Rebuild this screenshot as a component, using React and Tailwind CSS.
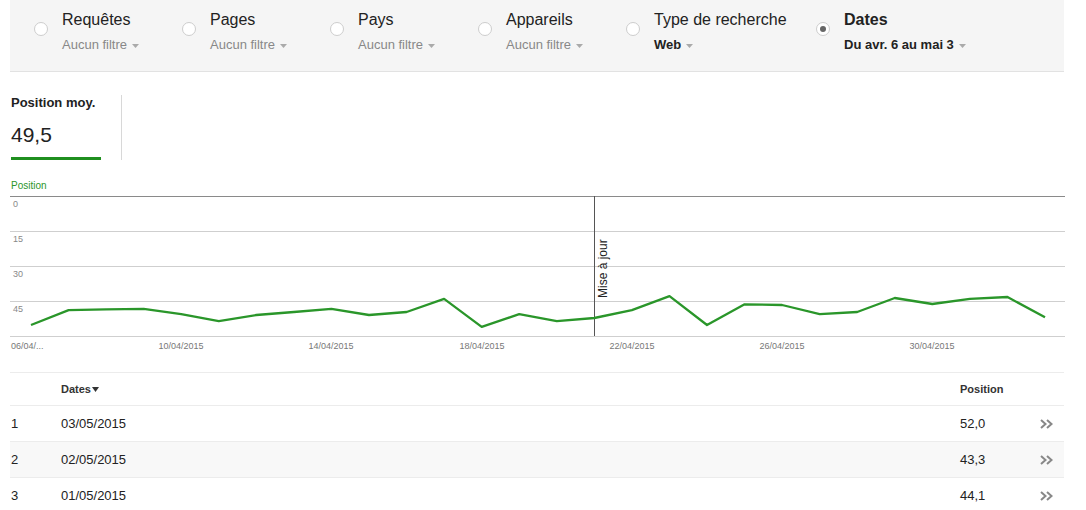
const filters = [
  { title: 'Requêtes', sub: 'Aucun filtre', w: 'w-[148px]' },
  { title: 'Pages', sub: 'Aucun filtre', w: 'w-[148px]' },
  { title: 'Pays', sub: 'Aucun filtre', w: 'w-[148px]' },
  { title: 'Appareils', sub: 'Aucun filtre', w: 'w-[148px]' },
  { title: 'Type de recherche', sub: 'Web', strong: true, w: 'w-[190px]' },
  { title: 'Dates', sub: 'Du avr. 6 au mai 3', strong: true, bold: true, selected: true, w: 'w-[220px]' },
];

// average position per day, Apr 6 -> May 3
const values = [
  55.3, 48.9, 48.6, 48.4, 50.6, 53.6, 51.0, 49.7, 48.4, 51.0, 49.7, 44.1, 56.1, 50.6,
  53.6, 52.3, 48.9, 42.9, 55.3, 46.4, 46.7, 50.6, 49.7, 43.7, 46.3, 44.1, 43.3, 52.0,
];

const rows = [
  { n: 1, date: '03/05/2015', pos: '52,0' },
  { n: 2, date: '02/05/2015', pos: '43,3' },
  { n: 3, date: '01/05/2015', pos: '44,1' },
];

const Caret = () => (
  <svg width="7" height="4" viewBox="0 0 7 4" className="ml-[5px] mt-[1px]">
    <path d="M0 0h7L3.5 4z" fill="#aaa" />
  </svg>
);

const FilterBar = () => (
  <div className="flex h-[72px] w-[1054px] border-b border-[#e2e2e2] bg-[#f5f5f5] pl-[24px]">
    {filters.map((f) => (
      <div key={f.title} className={`flex ${f.w} pt-[10px]`}>
        <div className="mt-[12px] flex h-[14px] w-[14px] items-center justify-center rounded-full border border-[#cdcdcd] bg-white">
          {f.selected && <div className="h-[6px] w-[6px] rounded-full bg-[#666]" />}
        </div>
        <div className="ml-[14px] flex flex-col">
          <div className={`text-[16px] leading-[20px] text-[#222] ${f.bold ? 'font-bold' : ''}`}>{f.title}</div>
          <div className="mt-[5px] flex items-center">
            <span className={`text-[13px] leading-[20px] ${f.strong ? 'font-bold text-[#222]' : 'text-[#888]'}`}>
              {f.sub}
            </span>
            <Caret />
          </div>
        </div>
      </div>
    ))}
  </div>
);

const Chart = () => {
  const pts = values
    .map((v, i) => `${(21 + i * 37.556).toFixed(1)},${(6 + v * (35 / 15)).toFixed(1)}`)
    .join(' ');
  const dates = [
    ['10/04/2015', 171],
    ['14/04/2015', 321],
    ['18/04/2015', 472],
    ['22/04/2015', 622],
    ['26/04/2015', 772],
    ['30/04/2015', 922],
  ];
  return (
    <svg width="1055" height="166" className="block">
      <line x1="0" y1="6.5" x2="1055" y2="6.5" stroke="#8a8a8a" />
      {[41.5, 76.5, 111.5, 146.5].map((y) => (
        <line key={y} x1="0" y1={y} x2="1055" y2={y} stroke="#cfcfcf" />
      ))}
      {[['0', 17], ['15', 52], ['30', 87], ['45', 122]].map(([t, y]) => (
        <text key={t} x="3" y={y} fontSize="9" fill="#888">{t}</text>
      ))}
      <line x1="584.5" y1="6" x2="584.5" y2="146" stroke="#555" />
      <text
        x="0"
        y="0"
        fontSize="12"
        fill="#222"
        transform="translate(597 108) rotate(-90)"
      >
        Mise à jour
      </text>
      <polyline points={pts} fill="none" stroke="#2a962a" strokeWidth="2.3" strokeLinejoin="round" />
      <text x="1" y="159" fontSize="9" fill="#777">06/04/...</text>
      {dates.map(([t, x]) => (
        <text key={t} x={x} y="159" fontSize="9" fill="#777" textAnchor="middle">{t}</text>
      ))}
    </svg>
  );
};

const Chevrons = () => (
  <svg width="13" height="10" viewBox="0 0 13 10">
    <path d="M1 1l4.5 4L1 9M7 1l4.5 4L7 9" fill="none" stroke="#888" strokeWidth="2" />
  </svg>
);

export default function App() {
  return (
    <div className="min-h-[510px] bg-white pl-[10px] font-['Liberation_Sans',Arial,sans-serif]">
      <FilterBar />

      <div className="flex pt-[23px]">
        <div className="ml-[1px] w-[90px]">
          <div className="text-[13px] font-bold leading-[16px] text-[#222]">Position moy.</div>
          <div className="mt-[12px] text-[21px] leading-[24px] text-[#222]">49,5</div>
          <div className="mt-[10px] h-[3px] bg-[#1f8f1f]" />
        </div>
        <div className="ml-[20px] h-[65px] w-px bg-[#d8d8d8]" />
      </div>

      <div className="ml-[1px] mt-[21px] text-[10px] leading-[9px] text-[#2a962a]">Position</div>
      <Chart />

      <div className="mt-[16px] w-[1054px] text-[#222]">
        <div className="flex h-[34px] items-center border-t border-b border-[#ececec] text-[11px] font-bold text-[#333]">
          <div className="w-[51px]" />
          <div className="flex flex-1 items-center">
            Dates
            <svg width="7" height="5" viewBox="0 0 7 5" className="ml-[1px]">
              <path d="M0 0h7L3.5 5z" fill="#333" />
            </svg>
          </div>
          <div className="w-[104px]">Position</div>
        </div>
        {rows.map((r, i) => (
          <div
            key={r.n}
            className={`flex h-[36px] items-center border-b border-[#ececec] text-[13px] ${i === 1 ? 'bg-[#f8f8f8]' : ''}`}
          >
            <div className="w-[51px] pl-[1px]">{r.n}</div>
            <div className="flex-1">{r.date}</div>
            <div className="w-[80px]">{r.pos}</div>
            <div className="w-[24px]"><Chevrons /></div>
          </div>
        ))}
      </div>
    </div>
  );
}
